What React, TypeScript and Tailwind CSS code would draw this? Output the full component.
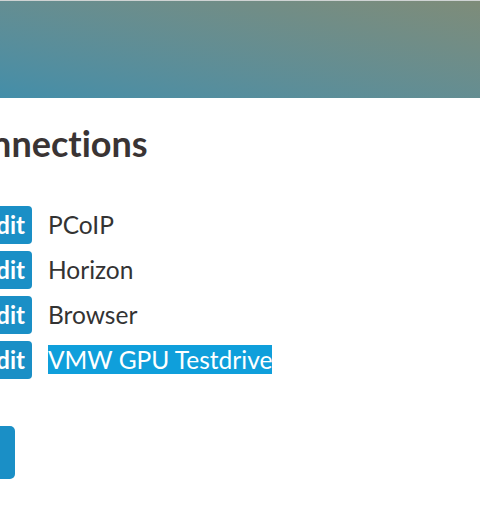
const rows = ["PCoIP", "Horizon", "Browser"];

export default function App() {
  return (
    <div className="w-[480px] h-[510px] overflow-hidden bg-white font-['Lato','Liberation_Sans',sans-serif] border-t border-[#cfd3d3] [font-variant-ligatures:none]">
      <div className="h-[97px] bg-gradient-to-tr from-[#438ea9] to-[#7e8c79]" />
      <div className="-ml-[53px] pt-[23px]">
        <h1 className="text-[36px] leading-[44px] font-bold text-[#3a3434]">Connections</h1>
      </div>
      <div className="-ml-[24px] mt-[41px] flex flex-col gap-[7px]">
        {rows.map((r) => (
          <div key={r} className="flex items-center gap-4">
            <button className="h-[38px] w-[56px] rounded-[4px] bg-[#1a8fc6] text-white font-bold text-[24px] leading-none">
              Edit
            </button>
            <span className="text-[24.5px] text-[#333333]">{r}</span>
          </div>
        ))}
        <div className="flex items-center gap-4">
          <button className="h-[38px] w-[56px] rounded-[4px] bg-[#1a8fc6] text-white font-bold text-[24px] leading-none">
            Edit
          </button>
          <span className="text-[24.5px] text-white">
            <span className="bg-[#0f9fdb]">VMW GPU Testdrive</span>
          </span>
        </div>
      </div>
      <div className="-ml-[60px] mt-[47px]">
        <button className="h-[53px] w-[75px] rounded-[5px] bg-[#1a8fc6]" />
      </div>
    </div>
  );
}
